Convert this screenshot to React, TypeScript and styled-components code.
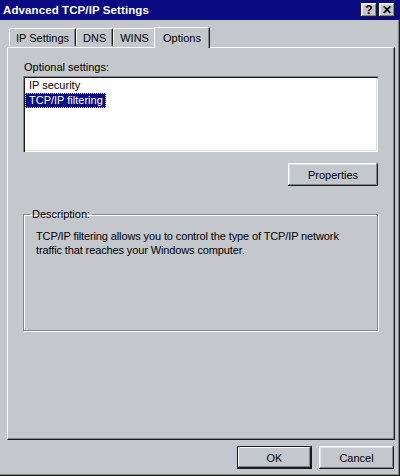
import React, { useState } from 'react'
import styled, { createGlobalStyle, css } from 'styled-components'

const GlobalStyle = createGlobalStyle`
  html, body {
    margin: 0;
    padding: 0;
    background: #c4c7cb;
  }
  body {
    font-family: 'Liberation Sans', Arial, sans-serif;
    font-size: 10.5px;
    color: #000;
  }
`

const raised = css`
  box-shadow: inset -1px -1px #1a1a1a, inset 1px 1px #ffffff, inset -2px -2px #83868a, inset 2px 2px #dfe1e4;
`

const Window = styled.div`
  width: 400px;
  height: 476px;
  display: flex;
  flex-direction: column;
  background: #c4c7cb;
  box-shadow: inset -1px -1px #1a1a1a, inset -2px -2px #83868a;
  box-sizing: border-box;
`

const TitleBar = styled.div`
  height: 20px;
  background: #0a0a82;
  display: flex;
  align-items: center;
  padding: 0 5px 0 3px;
  flex-shrink: 0;
`

const Title = styled.span`
  flex: 1;
  color: #fff;
  font-weight: bold;
  font-size: 11.5px;
  letter-spacing: 0.1px;
`

const CaptionButtons = styled.div`
  display: flex;
  gap: 2px;
`

const CaptionButton = styled.div`
  width: 16px;
  height: 14px;
  background: #c4c7cb;
  ${raised};
  display: flex;
  align-items: center;
  justify-content: center;
  font-weight: bold;
  font-size: 12px;
  line-height: 1;
  color: #000;
`

const Body = styled.div`
  flex: 1;
  display: flex;
  flex-direction: column;
  padding: 7px 5px 0 7px;
  min-height: 0;
`

const TabStrip = styled.div`
  display: flex;
  align-items: flex-end;
  height: 20px;
  padding-left: 2px;
  position: relative;
  z-index: 1;
`

const Tab = styled.div<{ $active?: boolean }>`
  height: 17px;
  padding: 0 6px;
  display: flex;
  align-items: center;
  background: #c4c7cb;
  border-top: 1px solid #fff;
  border-left: 1px solid #fff;
  border-right: 1px solid #1a1a1a;
  box-shadow: inset -1px 0 #83868a;
  border-radius: 2px 2px 0 0;
  white-space: nowrap;
  font-size: 11px;
  margin-bottom: 1px;

  ${({ $active }) =>
    $active &&
    css`
      height: 19px;
      margin: 0 -2px -1px -2px;
      padding: 0 8px 1px;
      position: relative;
      z-index: 2;
    `}
`

const TabPanel = styled.div`
  flex: 1;
  display: flex;
  flex-direction: column;
  padding: 12px 16px 0 15px;
  border-top: 1px solid #fff;
  border-left: 1px solid #fff;
  border-right: 1px solid #1a1a1a;
  border-bottom: 1px solid #1a1a1a;
  box-shadow: inset -1px -1px #83868a;
  min-height: 0;
`

const Label = styled.div`
  font-size: 11px;
  line-height: 14px;
  margin-left: 1px;
  margin-bottom: 2px;
`

const ListBox = styled.div`
  height: 76px;
  box-sizing: border-box;
  background: #fff;
  box-shadow: inset 1px 1px #83868a, inset 2px 2px #1a1a1a, inset -1px -1px #fff, inset -2px -2px #dfe1e4;
  padding: 2px 2px;
  display: flex;
  flex-direction: column;
  align-items: flex-start;
`

const ListItem = styled.div<{ $selected?: boolean }>`
  font-size: 11px;
  line-height: 13px;
  padding: 0 2px 0 3px;
  border: 1px dotted transparent;

  ${({ $selected }) =>
    $selected &&
    css`
      background: #0a0a82;
      color: #fff;
      border-color: #d8d8a0;
    `}
`

const ButtonRow = styled.div`
  display: flex;
  justify-content: flex-end;
  margin-top: 11px;
`

const PushButton = styled.button<{ $default?: boolean; $width: number }>`
  width: ${({ $width }) => $width}px;
  height: 23px;
  border: none;
  background: #c4c7cb;
  font-family: inherit;
  font-size: 11px;
  color: #000;
  padding: 0;
  ${raised};

  ${({ $default }) =>
    $default &&
    css`
      box-shadow: inset 0 0 0 1px #1a1a1a, inset -2px -2px #1a1a1a, inset 2px 2px #fff, inset -3px -3px #83868a;
    `}
`

const GroupBox = styled.fieldset`
  margin: 22px 0 0;
  height: 123px;
  box-sizing: border-box;
  padding: 9px 10px 0 6px;
  border: 1px solid #83868a;
  box-shadow: 1px 1px #fff, inset 1px 1px #fff;
  border-radius: 0;
`

const Legend = styled.legend`
  font-size: 11px;
  padding: 0 2px;
`

const Description = styled.p`
  margin: 0 0 0 6px;
  font-size: 11px;
  line-height: 14px;
  letter-spacing: -0.12px;
`

const Footer = styled.div`
  display: flex;
  justify-content: flex-end;
  gap: 7px;
  padding: 6px 1px 7px 0;
`

export default function App() {
  const [selected, setSelected] = useState(1)
  const tabs = ['IP Settings', 'DNS', 'WINS', 'Options']
  const items = ['IP security', 'TCP/IP filtering']

  return (
    <>
      <GlobalStyle />
      <Window>
        <TitleBar>
          <Title>Advanced TCP/IP Settings</Title>
          <CaptionButtons>
            <CaptionButton>?</CaptionButton>
            <CaptionButton>✕</CaptionButton>
          </CaptionButtons>
        </TitleBar>
        <Body>
          <TabStrip>
            {tabs.map((name) => (
              <Tab key={name} $active={name === 'Options'}>
                {name}
              </Tab>
            ))}
          </TabStrip>
          <TabPanel>
            <Label>Optional settings:</Label>
            <ListBox>
              {items.map((item, index) => (
                <ListItem key={item} $selected={index === selected} onClick={() => setSelected(index)}>
                  {item}
                </ListItem>
              ))}
            </ListBox>
            <ButtonRow>
              <PushButton $width={90}>Properties</PushButton>
            </ButtonRow>
            <GroupBox>
              <Legend>Description:</Legend>
              <Description>
                TCP/IP filtering allows you to control the type of TCP/IP network
                <br />
                traffic that reaches your Windows computer.
              </Description>
            </GroupBox>
          </TabPanel>
          <Footer>
            <PushButton $width={75} $default>
              OK
            </PushButton>
            <PushButton $width={75}>Cancel</PushButton>
          </Footer>
        </Body>
      </Window>
    </>
  )
}
